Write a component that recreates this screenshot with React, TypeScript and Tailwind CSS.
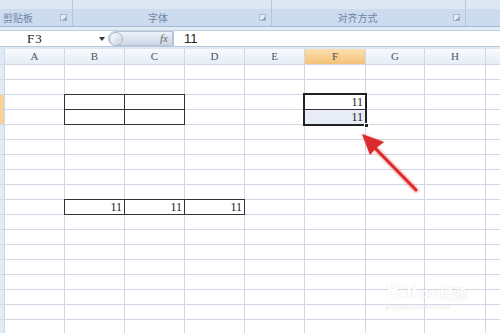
import React from 'react';

const cols = ['A', 'B', 'C', 'D', 'E', 'F', 'G', 'H', 'I'];
const rows = Array.from({ length: 18 }, (_, i) => i + 1);

// cells that carry a thin black border, and the value shown in them
const bordered: Record<string, string> = {
	B3: '',
	C3: '',
	B4: '',
	C4: '',
	F3: '11',
	F4: '11',
	B10: '11',
	C10: '11',
	D10: '11',
};

function Launcher() {
	return (
		<div className="w-[7px] h-[7px] border border-[#a7b9d2] bg-[#e3ebf6] flex items-end justify-end">
			<div className="w-[3px] h-[3px] border-r border-b border-[#7f93b3]" />
		</div>
	);
}

function Ribbon() {
	const groups = [
		{ label: '剪贴板', w: 'w-[73px]', align: 'justify-start pl-[3px]' },
		{ label: '字体', w: 'w-[199px]', align: 'justify-center pr-[16px]' },
		{ label: '对齐方式', w: 'w-[194px]', align: 'justify-center pr-[10px]' },
	];
	return (
		<div className="h-[27px] flex bg-[#dae5f3] border-b border-[#a3badb]">
			{groups.map((g) => (
				<div key={g.label} className={`${g.w} flex flex-col border-r border-[#b3c7e1] shadow-[1px_0_0_#eef3fa]`}>
					<div className="h-[9px] bg-[#dde7f4]" />
					<div className="flex-1 bg-[#cddbee] flex items-center relative">
						<div className={`flex-1 flex ${g.align} text-[10px] leading-none text-[#6f84a8]`}>{g.label}</div>
						<div className="pr-[5px]">
							<Launcher />
						</div>
					</div>
				</div>
			))}
			<div className="flex-1 flex flex-col">
				<div className="h-[9px] bg-[#dde7f4]" />
				<div className="flex-1 bg-[#cddbee]" />
			</div>
		</div>
	);
}

function FormulaBar() {
	return (
		<div className="pt-[3px] bg-[#e3ebf5]">
			<div className="h-[17px] flex bg-white border-t border-[#c3d1e4] border-b border-b-[#b9c9dd]">
				<div className="w-[97px] pl-[27px] flex items-center text-[13px] tracking-[1px] text-[#222]" style={{ fontFamily: '"Liberation Serif", serif' }}>
					F3
				</div>
				<div className="w-[10px] flex items-center justify-center">
					<svg width="6" height="4" viewBox="0 0 6 4">
						<path d="M0 0 H6 L3 4 Z" fill="#333" />
					</svg>
				</div>
				<div className="w-[65px] ml-[1px] flex items-center rounded-l-full bg-linear-to-b from-[#eef2f8] to-[#cbd6e5] border border-[#b4c3d8]">
					<div className="w-[14px] h-[14px] rounded-full bg-linear-to-br from-white to-[#c8d2df] border border-[#aebbd0]" />
					<div className="flex-1 flex justify-end pr-[4px] text-[11px] italic text-[#6a6a6a]" style={{ fontFamily: '"Liberation Serif", serif' }}>
						fx
					</div>
				</div>
				<div className="flex-1 pl-[10px] flex items-center text-[13px] text-[#222] border-l border-[#b4c3d8]" style={{ fontFamily: '"Liberation Sans", sans-serif' }}>
					11
				</div>
			</div>
			<div className="h-[2px] bg-[#dfe7f1]" />
		</div>
	);
}

function Sheet() {
	return (
		<div className="relative">
			<div className="grid grid-cols-[4px_59px_59px_59px_59px_59px_60px_58px_60px_1fr] grid-rows-[15px] auto-rows-[14px] gap-px bg-[#d0d7e5]" style={{ fontFamily: '"Liberation Serif", serif' }}>
				<div className="bg-[#dfe8f5]" />
				{cols.map((c) =>
					c === 'F' ? (
						<div key={c} className="bg-linear-to-b from-[#fbdfae] to-[#f4c277] flex items-center justify-center text-[11px] text-[#4a4a4a]">
							{c}
						</div>
					) : (
						<div key={c} className="bg-linear-to-b from-[#f8fafd] to-[#e6edf6] flex items-center justify-center text-[11px] text-[#4a5568]">
							{c === 'I' ? '' : c}
						</div>
					),
				)}
				{rows.map((r) => (
					<React.Fragment key={r}>
						<div className={r === 3 || r === 4 ? 'bg-[#f7d294]' : 'bg-[#e2eaf6]'} />
						{cols.map((c) => {
							const id = `${c}${r}`;
							if (id in bordered) {
								const tint = id === 'F4' ? 'bg-[#e8ecf6]' : 'bg-white';
								return (
									<div key={id} className={`${tint} shadow-[0_0_0_1px_#333] flex items-center justify-end pr-[2px] text-[12px] leading-none text-[#222]`}>
										{bordered[id]}
									</div>
								);
							}
							return <div key={id} className="bg-white" />;
						})}
					</React.Fragment>
				))}
			</div>
			{/* selection outline F3:F4 with fill handle */}
			<div className="absolute left-[303px] top-[44px] w-[64px] h-[33px] border-2 border-[#222] z-20">
				<div className="absolute right-[-4px] bottom-[-4px] w-[5px] h-[5px] bg-[#222] border border-white" />
			</div>
		</div>
	);
}

function Arrow() {
	return (
		<svg className="absolute inset-0 pointer-events-none z-30" width="500" height="333" viewBox="0 0 500 333">
			<defs>
				<filter id="soft" x="-20%" y="-20%" width="140%" height="140%">
					<feGaussianBlur stdDeviation="1.2" />
				</filter>
			</defs>
			<g filter="url(#soft)" opacity="0.45">
				<line x1="416" y1="190" x2="373" y2="146" stroke="#e04040" strokeWidth="5" strokeLinecap="round" />
				<path d="M362 134 L384 142 L376 148 L370 155 Z" fill="#e04040" />
			</g>
			<line x1="416" y1="190" x2="373" y2="146" stroke="#dd2a2a" strokeWidth="3" strokeLinecap="round" />
			<path d="M362 134 L384 142 L376 148 L370 155 Z" fill="#dd2a2a" />
		</svg>
	);
}

function Watermark() {
	return (
		<div className="absolute left-[386px] top-[280px] z-30 pointer-events-none flex flex-col text-white" style={{ textShadow: '0 0 1px rgba(0,0,0,0.18)' }}>
			<div className="flex items-end gap-[2px] leading-none" style={{ fontFamily: '"Liberation Sans", sans-serif' }}>
				<span className="text-[20px] font-bold">Bai</span>
				<span className="text-[15px] font-bold">du</span>
				<span className="text-[14px] font-bold" style={{ fontFamily: '"Noto Sans CJK SC", sans-serif' }}>
					经验
				</span>
			</div>
			<div className="text-[8px] leading-none mt-[3px]" style={{ fontFamily: '"Liberation Sans", sans-serif' }}>
				jingyan.baidu.com
			</div>
		</div>
	);
}

export default function App() {
	return (
		<div className="w-[500px] h-[333px] overflow-hidden relative bg-white" style={{ fontFamily: '"Noto Sans CJK SC", "Noto Sans", sans-serif' }}>
			<Ribbon />
			<FormulaBar />
			<Sheet />
			<Arrow />
			<Watermark />
		</div>
	);
}
